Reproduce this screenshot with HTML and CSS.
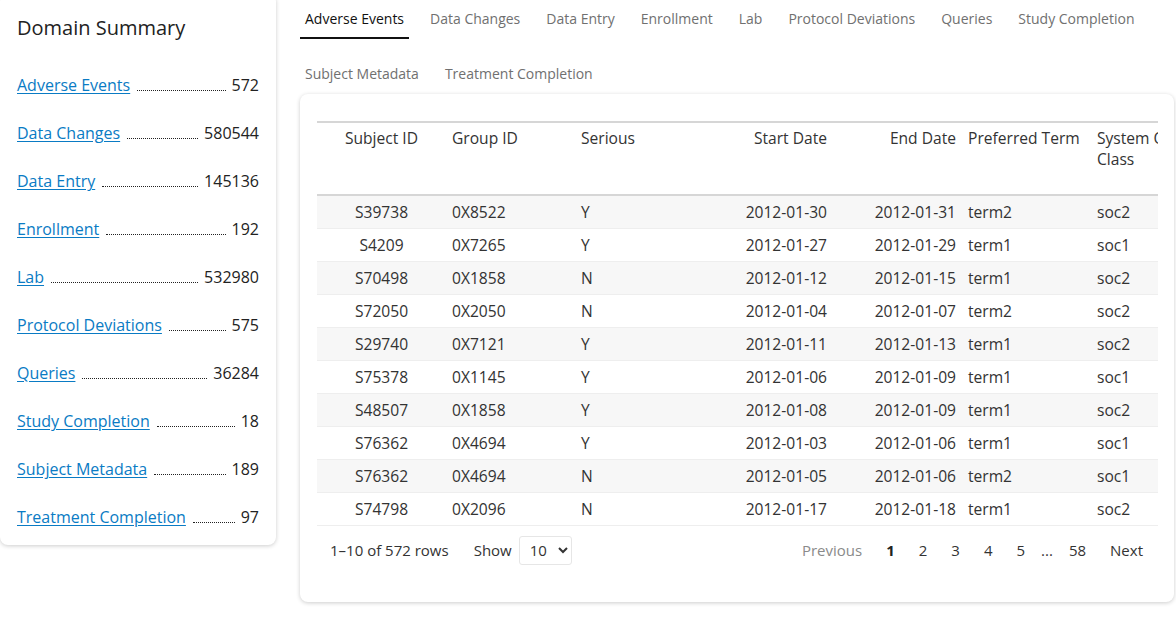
FILE: index.html
```html
<!DOCTYPE html>
<html>
<head>
<meta charset="utf-8">
<title>Domain Summary</title>
<link rel="stylesheet" href="styles.css">
</head>
<body>
<div class="page">
  <aside class="summary-card">
    <h2 class="summary-title">Domain Summary</h2>
    <ul class="summary-list">
      <li class="summary-row"><a href="#" class="summary-link">Adverse Events</a><span class="leader"></span><span class="count">572</span></li>
      <li class="summary-row"><a href="#" class="summary-link">Data Changes</a><span class="leader"></span><span class="count">580544</span></li>
      <li class="summary-row"><a href="#" class="summary-link">Data Entry</a><span class="leader"></span><span class="count">145136</span></li>
      <li class="summary-row"><a href="#" class="summary-link">Enrollment</a><span class="leader"></span><span class="count">192</span></li>
      <li class="summary-row"><a href="#" class="summary-link">Lab</a><span class="leader"></span><span class="count">532980</span></li>
      <li class="summary-row"><a href="#" class="summary-link">Protocol Deviations</a><span class="leader"></span><span class="count">575</span></li>
      <li class="summary-row"><a href="#" class="summary-link">Queries</a><span class="leader"></span><span class="count">36284</span></li>
      <li class="summary-row"><a href="#" class="summary-link">Study Completion</a><span class="leader"></span><span class="count">18</span></li>
      <li class="summary-row"><a href="#" class="summary-link">Subject Metadata</a><span class="leader"></span><span class="count">189</span></li>
      <li class="summary-row"><a href="#" class="summary-link">Treatment Completion</a><span class="leader"></span><span class="count">97</span></li>
    </ul>
  </aside>
  <main class="main">
    <nav class="tabs">
      <a href="#" class="tab active">Adverse Events</a>
      <a href="#" class="tab">Data Changes</a>
      <a href="#" class="tab">Data Entry</a>
      <a href="#" class="tab">Enrollment</a>
      <a href="#" class="tab">Lab</a>
      <a href="#" class="tab">Protocol Deviations</a>
      <a href="#" class="tab">Queries</a>
      <a href="#" class="tab">Study Completion</a>
      <a href="#" class="tab">Subject Metadata</a>
      <a href="#" class="tab">Treatment Completion</a>
    </nav>
    <section class="table-card">
      <div class="table-wrap">
        <table class="data-table">
          <thead>
            <tr>
              <th class="c">Subject ID</th>
              <th>Group ID</th>
              <th>Serious</th>
              <th class="r">Start Date</th>
              <th class="r">End Date</th>
              <th>Preferred Term</th>
              <th>System Organ Class</th>
            </tr>
          </thead>
          <tbody>
            <tr><td class="c">S39738</td><td>0X8522</td><td>Y</td><td class="r">2012-01-30</td><td class="r">2012-01-31</td><td>term2</td><td>soc2</td></tr>
            <tr><td class="c">S4209</td><td>0X7265</td><td>Y</td><td class="r">2012-01-27</td><td class="r">2012-01-29</td><td>term1</td><td>soc1</td></tr>
            <tr><td class="c">S70498</td><td>0X1858</td><td>N</td><td class="r">2012-01-12</td><td class="r">2012-01-15</td><td>term1</td><td>soc2</td></tr>
            <tr><td class="c">S72050</td><td>0X2050</td><td>N</td><td class="r">2012-01-04</td><td class="r">2012-01-07</td><td>term2</td><td>soc2</td></tr>
            <tr><td class="c">S29740</td><td>0X7121</td><td>Y</td><td class="r">2012-01-11</td><td class="r">2012-01-13</td><td>term1</td><td>soc2</td></tr>
            <tr><td class="c">S75378</td><td>0X1145</td><td>Y</td><td class="r">2012-01-06</td><td class="r">2012-01-09</td><td>term1</td><td>soc1</td></tr>
            <tr><td class="c">S48507</td><td>0X1858</td><td>Y</td><td class="r">2012-01-08</td><td class="r">2012-01-09</td><td>term1</td><td>soc2</td></tr>
            <tr><td class="c">S76362</td><td>0X4694</td><td>Y</td><td class="r">2012-01-03</td><td class="r">2012-01-06</td><td>term1</td><td>soc1</td></tr>
            <tr><td class="c">S76362</td><td>0X4694</td><td>N</td><td class="r">2012-01-05</td><td class="r">2012-01-06</td><td>term2</td><td>soc1</td></tr>
            <tr><td class="c">S74798</td><td>0X2096</td><td>N</td><td class="r">2012-01-17</td><td class="r">2012-01-18</td><td>term1</td><td>soc2</td></tr>
          </tbody>
        </table>
      </div>
      <div class="table-footer">
        <div class="page-info">
          <span class="row-info">1–10 of 572 rows</span>
          <label class="show">Show
            <select class="page-size">
              <option>10</option>
              <option>25</option>
              <option>50</option>
            </select>
          </label>
        </div>
        <div class="pagination">
          <span class="page-btn disabled">Previous</span>
          <span class="page-btn current">1</span>
          <span class="page-btn">2</span>
          <span class="page-btn">3</span>
          <span class="page-btn">4</span>
          <span class="page-btn">5</span>
          <span class="ellipsis">...</span>
          <span class="page-btn">58</span>
          <span class="page-btn">Next</span>
        </div>
      </div>
    </section>
  </main>
</div>
</body>
</html>
```

FILE: styles.css
```css
* { box-sizing: border-box; }
html, body { margin: 0; padding: 0; background: #fff; }
body {
  font-family: "Open Sans", "Noto Sans", sans-serif;
  color: #333;
  font-size: 16px;
}
.page {
  display: flex;
  align-items: flex-start;
  gap: 24px;
  width: 1176px;
  overflow: hidden;
  height: 640px;
}
.summary-card {
  flex: 0 0 276px;
  margin-top: -6px;
  background: #fff;
  border-radius: 8px;
  box-shadow: 0 1px 4px rgba(0,0,0,0.2);
  padding: 20px 17px 16px 17px;
}
.summary-title {
  margin: 0;
  font-size: 20px;
  font-weight: 400;
  line-height: 28px;
  color: #222;
}
.summary-list {
  list-style: none;
  margin: 31px 0 0 0;
  padding: 0;
  display: flex;
  flex-direction: column;
  gap: 24px;
}
.summary-row {
  display: flex;
  align-items: baseline;
  line-height: 24px;
}
.summary-link {
  color: #0a7bc4;
  text-decoration: underline;
  text-underline-offset: 2px;
}
.leader {
  flex: 1;
  border-bottom: 1px dotted #222;
  margin: 0 6px 0 7px;
  height: 1px;
}
.count { color: #222; }

.main {
  flex: 0 0 876px;
  display: flex;
  flex-direction: column;
  padding-top: 1px;
}
.tabs {
  display: flex;
  flex-wrap: wrap;
  column-gap: 16px;
  row-gap: 17px;
  margin-bottom: 0;
}
.tab {
  font-size: 14px;
  line-height: 20px;
  padding: 8px 5px;
  color: #707070;
  text-decoration: none;
  border-bottom: 2px solid transparent;
}
.tab.active {
  color: #111;
  border-bottom-color: #111;
}
.table-card {
  width: 874px;
  height: 508px;
  background: #fff;
  border-radius: 8px;
  box-shadow: 0 1px 4px rgba(0,0,0,0.2);
  padding: 27px 16px 0 17px;
  display: flex;
  flex-direction: column;
}
.table-wrap {
  overflow: hidden;
  border-bottom: 1px solid #eee;
}
.data-table {
  border-collapse: collapse;
  table-layout: fixed;
  width: 903px;
  font-size: 15.6px;
  color: #333;
}
.data-table th, .data-table td {
  width: 129px;
  padding: 0 6px;
  text-align: left;
  white-space: nowrap;
  overflow: hidden;
}
.data-table th {
  font-weight: 400;
  height: 73px;
  vertical-align: top;
  padding-top: 5px;
  line-height: 21px;
  white-space: normal;
  border-top: 2px solid #d6d6d6;
  border-bottom: 2px solid #d6d6d6;
}
.data-table td {
  height: 33px;
  line-height: 20px;
  border-bottom: 1px solid #eee;
}
.data-table tbody tr:last-child td { border-bottom: none; }
.data-table tbody tr:nth-child(odd) td { background: #f7f7f7; }
.data-table .c { text-align: center; }
.data-table .r { text-align: right; }

.table-footer {
  display: flex;
  justify-content: space-between;
  align-items: center;
  height: 48px;
  font-size: 15px;
  color: #333;
}
.page-info {
  display: flex;
  align-items: center;
  gap: 25px;
  padding-left: 13px;
}
.show {
  display: flex;
  align-items: center;
  gap: 7px;
}
.page-size {
  width: 53px;
  height: 29px;
  font-family: inherit;
  font-size: 15px;
  color: #333;
  border: 1px solid #e6e6e6;
  border-radius: 3px;
  background: #fff;
  padding: 0 4px 0 6px;
}
.pagination {
  display: flex;
  align-items: center;
  padding-right: 3px;
}
.page-btn {
  padding: 0 12px;
  line-height: 30px;
}
.page-btn.disabled { color: #8a8a8a; }
.page-btn.current { font-weight: 700; color: #222; }
.ellipsis { padding: 0 4px; }
```
